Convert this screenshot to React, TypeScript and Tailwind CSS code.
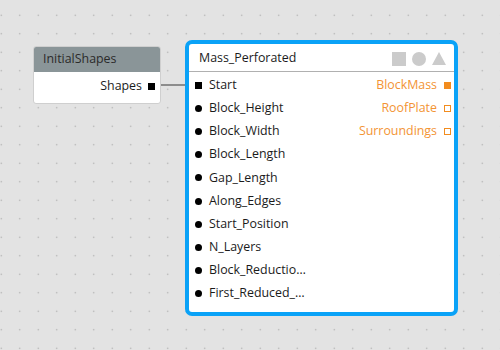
import React from "react";

const inputs = [
  "Block_Height",
  "Block_Width",
  "Block_Length",
  "Gap_Length",
  "Along_Edges",
  "Start_Position",
  "N_Layers",
  "Block_Reductio…",
  "First_Reduced_…",
];

const outputs: { label: string; filled: boolean }[] = [
  { label: "BlockMass", filled: true },
  { label: "RoofPlate", filled: false },
  { label: "Surroundings", filled: false },
];

export default function App() {
  return (
    <div
      className="relative w-[500px] h-[350px] overflow-hidden bg-[#e3e3e3] bg-[radial-gradient(circle,#a9a9a9_0.8px,transparent_1px)] bg-[length:18.5px_18.5px] bg-[position:-8px_6px] text-[12.4px] text-[#1b1b1b]"
      style={{ fontFamily: '"Open Sans", "Noto Sans", sans-serif' }}
    >
      {/* connection line */}
      <div className="absolute left-[155px] top-[84px] w-[40px] h-[2px] bg-[#8d8d8d]" />

      {/* InitialShapes node */}
      <div className="absolute left-[33px] top-[46px] w-[128px] h-[58px] rounded-[3px] border border-[#cfcfcf] bg-white overflow-hidden flex flex-col">
        <div className="h-[25px] bg-[#8a9598] flex items-center pl-[9px] text-[#2a2a2a]">
          InitialShapes
        </div>
        <div className="flex items-center justify-end pr-[5px] h-[27px] pt-[1px]">
          <span>Shapes</span>
          <span className="ml-[6px] w-[7px] h-[7px] bg-black" />
        </div>
      </div>

      {/* Mass_Perforated node */}
      <div className="absolute left-[185px] top-[40px] w-[273px] h-[276px] rounded-[7px] border-[4px] border-[#0aa2f7] bg-white flex flex-col">
        <div className="h-[28px] flex items-center justify-between pl-[10px] pr-[8px] pt-[2px] border-b border-[#b0b0b0]">
          <span>Mass_Perforated</span>
          <div className="flex items-center gap-[6px]">
            <span className="w-[14px] h-[14px] bg-[#cbcbcb]" />
            <span className="w-[14px] h-[14px] rounded-full bg-[#cbcbcb]" />
            <svg width="14" height="13" viewBox="0 0 14 13">
              <polygon points="7,0 14,13 0,13" fill="#cbcbcb" />
            </svg>
          </div>
        </div>
        <div className="flex pt-[1.5px]">
          <div className="flex flex-col flex-1">
            <div className="h-[23.2px] flex items-center pl-[6px]">
              <span className="w-[7px] h-[7px] bg-black" />
              <span className="ml-[7px]">Start</span>
            </div>
            {inputs.map((n) => (
              <div key={n} className="h-[23.2px] flex items-center pl-[6px]">
                <span className="w-[7px] h-[7px] rounded-full bg-black" />
                <span className="ml-[7px]">{n}</span>
              </div>
            ))}
          </div>
          <div className="flex flex-col">
            {outputs.map((o) => (
              <div key={o.label} className="h-[23.2px] flex items-center justify-end pr-[3px] text-[#f39434]">
                <span>{o.label}</span>
                <span
                  className={
                    o.filled
                      ? "ml-[7px] w-[7px] h-[7px] bg-[#f28c1e]"
                      : "ml-[7px] w-[7px] h-[7px] border border-[#f28c1e] bg-white"
                  }
                />
              </div>
            ))}
          </div>
        </div>
      </div>
    </div>
  );
}
